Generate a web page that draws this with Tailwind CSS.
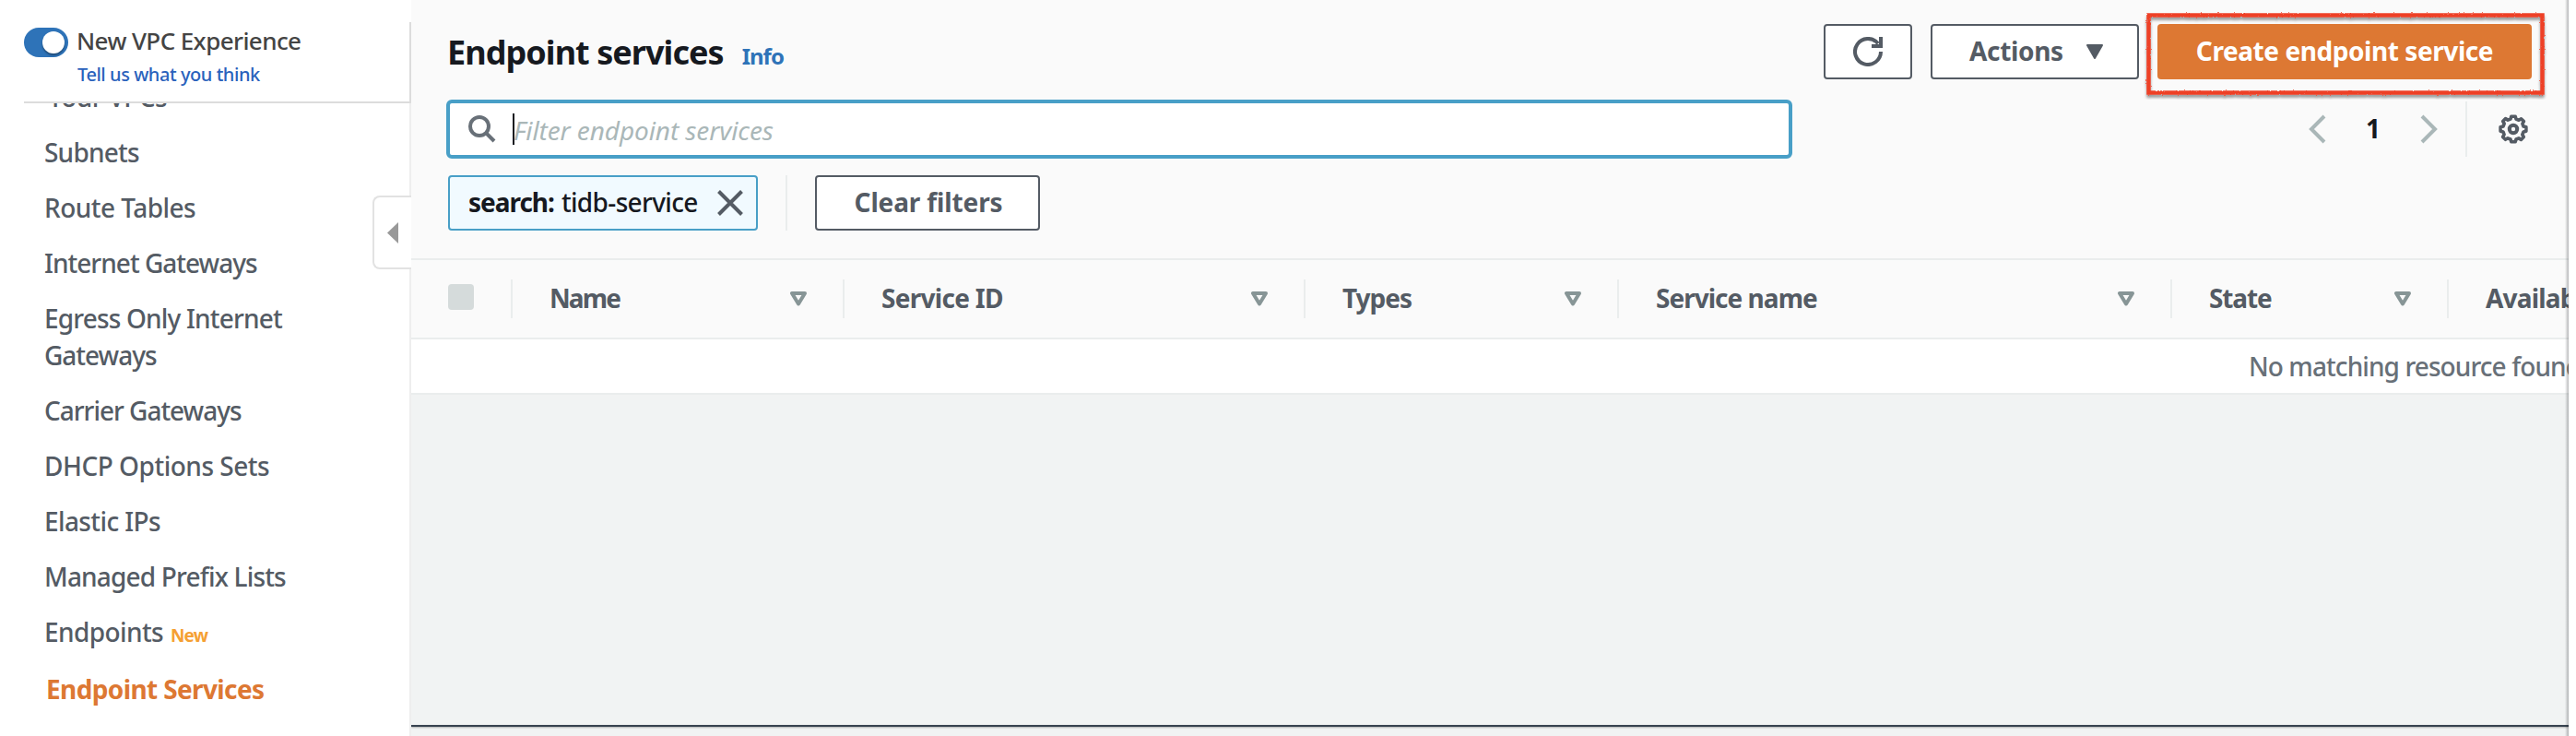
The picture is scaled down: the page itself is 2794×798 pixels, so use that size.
<!DOCTYPE html>
<html lang="en">
<head>
<meta charset="utf-8">
<title>Endpoint services</title>
<script src="https://cdn.jsdelivr.net/npm/@tailwindcss/browser@4"></script>
</head>
<body class="bg-white">
<div class="flex h-[798px] w-[2794px] overflow-hidden bg-white font-['Noto_Sans',sans-serif] text-[28px] leading-[40px] font-medium text-[#545b64] whitespace-nowrap">

  <!-- Sidebar -->
  <aside class="relative flex w-[446px] shrink-0 flex-col">
    <div class="mt-[24px] ml-[26px] flex h-[88px] shrink-0 border-r-2 border-b-2 border-[#dcdcdc]">
      <div class="mt-[6px] flex h-8 w-12 shrink-0 items-center justify-end rounded-full bg-[#2e73b8] pr-[4px]">
        <div class="h-6 w-6 rounded-full bg-white shadow-[0_2px_2px_rgba(0,0,0,0.35)]"></div>
      </div>
      <div class="ml-[9px] flex flex-col">
        <span class="mt-[4px] text-[26px] leading-[32px] tracking-[-0.59px] text-[#444444]">New VPC Experience</span>
        <span class="ml-[1px] mt-[7px] text-[20px] leading-[28px] tracking-[-0.45px] text-[#2a62bc]">Tell us what you think</span>
      </div>
    </div>
    <nav class="flex-1 overflow-hidden border-r-2 border-[#eeeeee] pl-[48px]">
      <ul class="-mt-[27px] flex flex-col gap-5">
        <li class="pl-[4px] tracking-[-0.6px]">Your VPCs</li>
        <li class="tracking-[-0.78px]">Subnets</li>
        <li class="tracking-[-0.54px]">Route Tables</li>
        <li class="tracking-[-0.98px]">Internet Gateways</li>
        <li class="tracking-[-0.83px]">Egress Only Internet<br><span class="tracking-[-1px]">Gateways</span></li>
        <li class="tracking-[-1.02px]">Carrier Gateways</li>
        <li class="tracking-[-0.49px]">DHCP Options Sets</li>
        <li class="tracking-[-0.61px]">Elastic IPs</li>
        <li class="tracking-[-0.82px]">Managed Prefix Lists</li>
        <li class="flex items-baseline gap-[8px] tracking-[-0.6px]">Endpoints <span class="text-[19px] leading-none font-bold tracking-[-0.9px] text-[#f5a033]">New</span></li>
        <li class="pt-[2px] pl-[2px] font-bold tracking-[-0.62px] text-[#dd7833]">Endpoint Services</li>
      </ul>
    </nav>
    <!-- Collapse handle overlapping the sidebar edge -->
    <div class="absolute top-[212px] right-0 flex h-20 w-[42px] items-center rounded-l-lg border-2 border-r-0 border-[#e2e2e2] bg-white pl-[14px]">
      <svg class="h-[23px] w-[12px]" viewBox="0 0 12 23"><path d="M12 0V23L0 11.5Z" fill="#999"/></svg>
    </div>
  </aside>

  <!-- Main panel -->
  <main class="relative flex w-[2340px] shrink-0 flex-col overflow-hidden bg-[#f1f3f3]">
    <section class="flex h-[282px] shrink-0 flex-col border-b-2 border-[#eaeded] bg-[#fafafa] pt-[26px]">
      <div class="flex h-[60px] shrink-0 pr-[40px] pl-[39px]">
        <div class="flex items-baseline gap-[20px] pt-[1px]">
          <h1 class="text-[36px] leading-[60px] font-bold tracking-[-0.95px] text-[#16191f]">Endpoint services</h1>
          <span class="text-[24px] leading-none font-bold tracking-[-1px] text-[#2e73b8]">Info</span>
        </div>
        <div class="ml-auto flex font-bold">
          <button class="mr-[20px] flex w-24 items-center justify-center rounded-[4px] border-2 border-[#545b64] bg-white">
            <svg class="h-8 w-8" viewBox="0 0 32 32" fill="none" stroke="#545b64" stroke-width="4"><path d="M30 16A14 14 0 1 1 27 7.3"/><path d="M30 0V10H20"/></svg>
          </button>
          <button class="mr-[20px] flex w-[226px] items-center rounded-[4px] border-2 border-[#545b64] bg-white pl-[40px]">
            <span class="w-[126px] pb-[2px] text-left tracking-[-0.34px]">Actions</span>
            <svg class="h-4 w-5" viewBox="0 0 20 16"><path d="M2 1H18L10 15Z" fill="#545b64" stroke="#545b64" stroke-width="2" stroke-linejoin="round"/></svg>
          </button>
          <button class="relative w-[406px] rounded-[4px] bg-[#dd7833] pb-[2px] tracking-[-0.43px] text-white">Create endpoint service
            <!-- Hand-drawn highlight around the button -->
            <svg class="absolute -top-[16px] -left-[16px] h-[98px] w-[442px]" viewBox="0 0 442 98" fill="none">
              <filter id="rough" x="-5%" y="-10%" width="110%" height="125%">
                <feTurbulence type="fractalNoise" baseFrequency="0.6" numOctaves="1" seed="4" result="n"/>
                <feDisplacementMap in="SourceGraphic" in2="n" xChannelSelector="R" yChannelSelector="G" scale="2.5" result="d"/>
                <feDropShadow in="d" dx="0" dy="3" stdDeviation="1.5" flood-color="#000" flood-opacity="0.4"/>
              </filter>
              <rect x="6.5" y="6.5" width="427" height="84" stroke="#ee4027" stroke-width="4.5" filter="url(#rough)"/>
            </svg>
          </button>
        </div>
      </div>

      <div class="mt-[22px] flex h-16 shrink-0 items-center pr-[44px] pl-[38px]">
        <div class="flex h-16 w-[1460px] items-center rounded-[6px] border-4 border-[#489fc7] bg-white pl-[20px]">
          <svg class="h-[30px] w-[30px]" viewBox="0 0 30 30" fill="none" stroke="#687078" stroke-width="4"><circle cx="12" cy="12" r="10"/><path d="M19 19L28 28"/></svg>
          <div class="ml-[18px] h-[34px] w-[2px] bg-[#16191f]"></div>
          <span class="-ml-[1px] pt-[2px] font-normal tracking-[-0.1px] italic text-[#aab7b8]">Filter endpoint services</span>
        </div>
        <div class="ml-auto flex items-center">
          <svg class="h-8 w-[20px]" viewBox="0 0 20 32" fill="none" stroke="#aab7b8" stroke-width="4"><path d="M17 2L3 16L17 30"/></svg>
          <span class="w-[100px] pb-[2px] text-center font-bold text-[#16191f]">1</span>
          <svg class="h-8 w-[20px]" viewBox="0 0 20 32" fill="none" stroke="#aab7b8" stroke-width="4"><path d="M3 2L17 16L3 30"/></svg>
          <div class="mr-[34px] ml-[30px] h-[60px] w-[2px] bg-[#eaeded]"></div>
          <svg class="h-8 w-8" viewBox="0 0 32 32" fill="none" stroke="#545b64"><path stroke-width="3.6" stroke-linejoin="round" d="M13.8 2.2H18.2L19 5L22 6.3L24.5 4.8L27.4 7.6L25.9 10.2L27 13L29.9 13.8V18.2L27 19L25.8 22L27.3 24.5L24.4 27.4L21.9 25.9L19 27L18.2 29.8H13.8L13 27L10 25.8L7.5 27.3L4.6 24.4L6.1 21.9L5 19L2.1 18.2V13.8L5 13L6.2 10L4.7 7.5L7.6 4.6L10.1 6.1L13 5Z"/><circle cx="16" cy="16" r="4.2" stroke-width="4"/></svg>
        </div>
      </div>

      <div class="mt-[18px] flex h-[60px] shrink-0 pl-[40px]">
        <div class="flex w-[336px] items-center rounded-[4px] border-2 border-[#489fc7] bg-[#f1faff] pl-[20px] text-[#16191f]">
          <span class="pb-[2px] font-bold tracking-[-1.02px]">search:</span>
          <span class="ml-[8px] pb-[2px] tracking-[-0.65px]">tidb-service</span>
          <svg class="ml-auto mr-[14px] h-7 w-7" viewBox="0 0 28 28" stroke="#545b64" stroke-width="4"><path d="M1.5 1.5L26.5 26.5M26.5 1.5L1.5 26.5"/></svg>
        </div>
        <div class="mr-[30px] ml-[30px] w-[2px] bg-[#eaeded]"></div>
        <button class="w-[244px] rounded-[4px] border-2 border-[#545b64] bg-white pb-[2px] pl-[2px] font-bold tracking-[-0.13px]">Clear filters</button>
      </div>
    </section>

    <!-- Table header -->
    <div class="flex h-[86px] shrink-0 items-center border-b-2 border-[#eaeded] bg-[#fafafa] font-bold">
      <div class="flex h-[42px] w-[110px] shrink-0 items-center border-r-2 border-[#eaeded] pl-[40px]"><div class="mb-[4px] h-7 w-7 rounded-[4px] bg-[#d5dbdb]"></div></div>
      <div class="flex h-[42px] w-[360px] shrink-0 items-center justify-between border-r-2 border-[#eaeded] pr-[38px] pl-[40px]"><span class="pb-[2px] tracking-[-1.9px]">Name</span><svg class="h-4 w-5" viewBox="0 0 20 16"><path d="M3 2H17L10 13.5Z" fill="none" stroke="#879596" stroke-width="4" stroke-linejoin="round"/></svg></div>
      <div class="flex h-[42px] w-[500px] shrink-0 items-center justify-between border-r-2 border-[#eaeded] pr-[38px] pl-[40px]"><span class="pb-[2px] tracking-[-0.71px]">Service ID</span><svg class="h-4 w-5" viewBox="0 0 20 16"><path d="M3 2H17L10 13.5Z" fill="none" stroke="#879596" stroke-width="4" stroke-linejoin="round"/></svg></div>
      <div class="flex h-[42px] w-[340px] shrink-0 items-center justify-between border-r-2 border-[#eaeded] pr-[38px] pl-[40px]"><span class="pb-[2px] tracking-[-1px]">Types</span><svg class="h-4 w-5" viewBox="0 0 20 16"><path d="M3 2H17L10 13.5Z" fill="none" stroke="#879596" stroke-width="4" stroke-linejoin="round"/></svg></div>
      <div class="flex h-[42px] w-[600px] shrink-0 items-center justify-between border-r-2 border-[#eaeded] pr-[38px] pl-[40px]"><span class="pb-[2px] tracking-[-0.98px]">Service name</span><svg class="h-4 w-5" viewBox="0 0 20 16"><path d="M3 2H17L10 13.5Z" fill="none" stroke="#879596" stroke-width="4" stroke-linejoin="round"/></svg></div>
      <div class="flex h-[42px] w-[300px] shrink-0 items-center justify-between border-r-2 border-[#eaeded] pr-[38px] pl-[40px]"><span class="pb-[2px] tracking-[-1.13px]">State</span><svg class="h-4 w-5" viewBox="0 0 20 16"><path d="M3 2H17L10 13.5Z" fill="none" stroke="#879596" stroke-width="4" stroke-linejoin="round"/></svg></div>
      <div class="shrink-0 pb-[2px] pl-[40px] tracking-[-0.8px]">Availability</div>
    </div>
    <div class="flex h-[60px] shrink-0 items-center border-b-2 border-[#eaeded] bg-white pl-[1993px] tracking-[-0.92px] text-[#687078]">No matching resource found</div>
    <div class="flex-1"></div>
    <div class="h-[2px] shrink-0 bg-[#37424f] shadow-[0_1px_2px_rgba(0,0,0,0.3)]"></div>
    <div class="h-[10px] shrink-0"></div>
    <!-- Shaded right edge -->
    <div class="absolute inset-y-0 right-0 w-[4px] bg-linear-to-r from-[#16191f]/0 to-[#16191f]/30"></div>
  </main>
</div>
</body>
</html>
